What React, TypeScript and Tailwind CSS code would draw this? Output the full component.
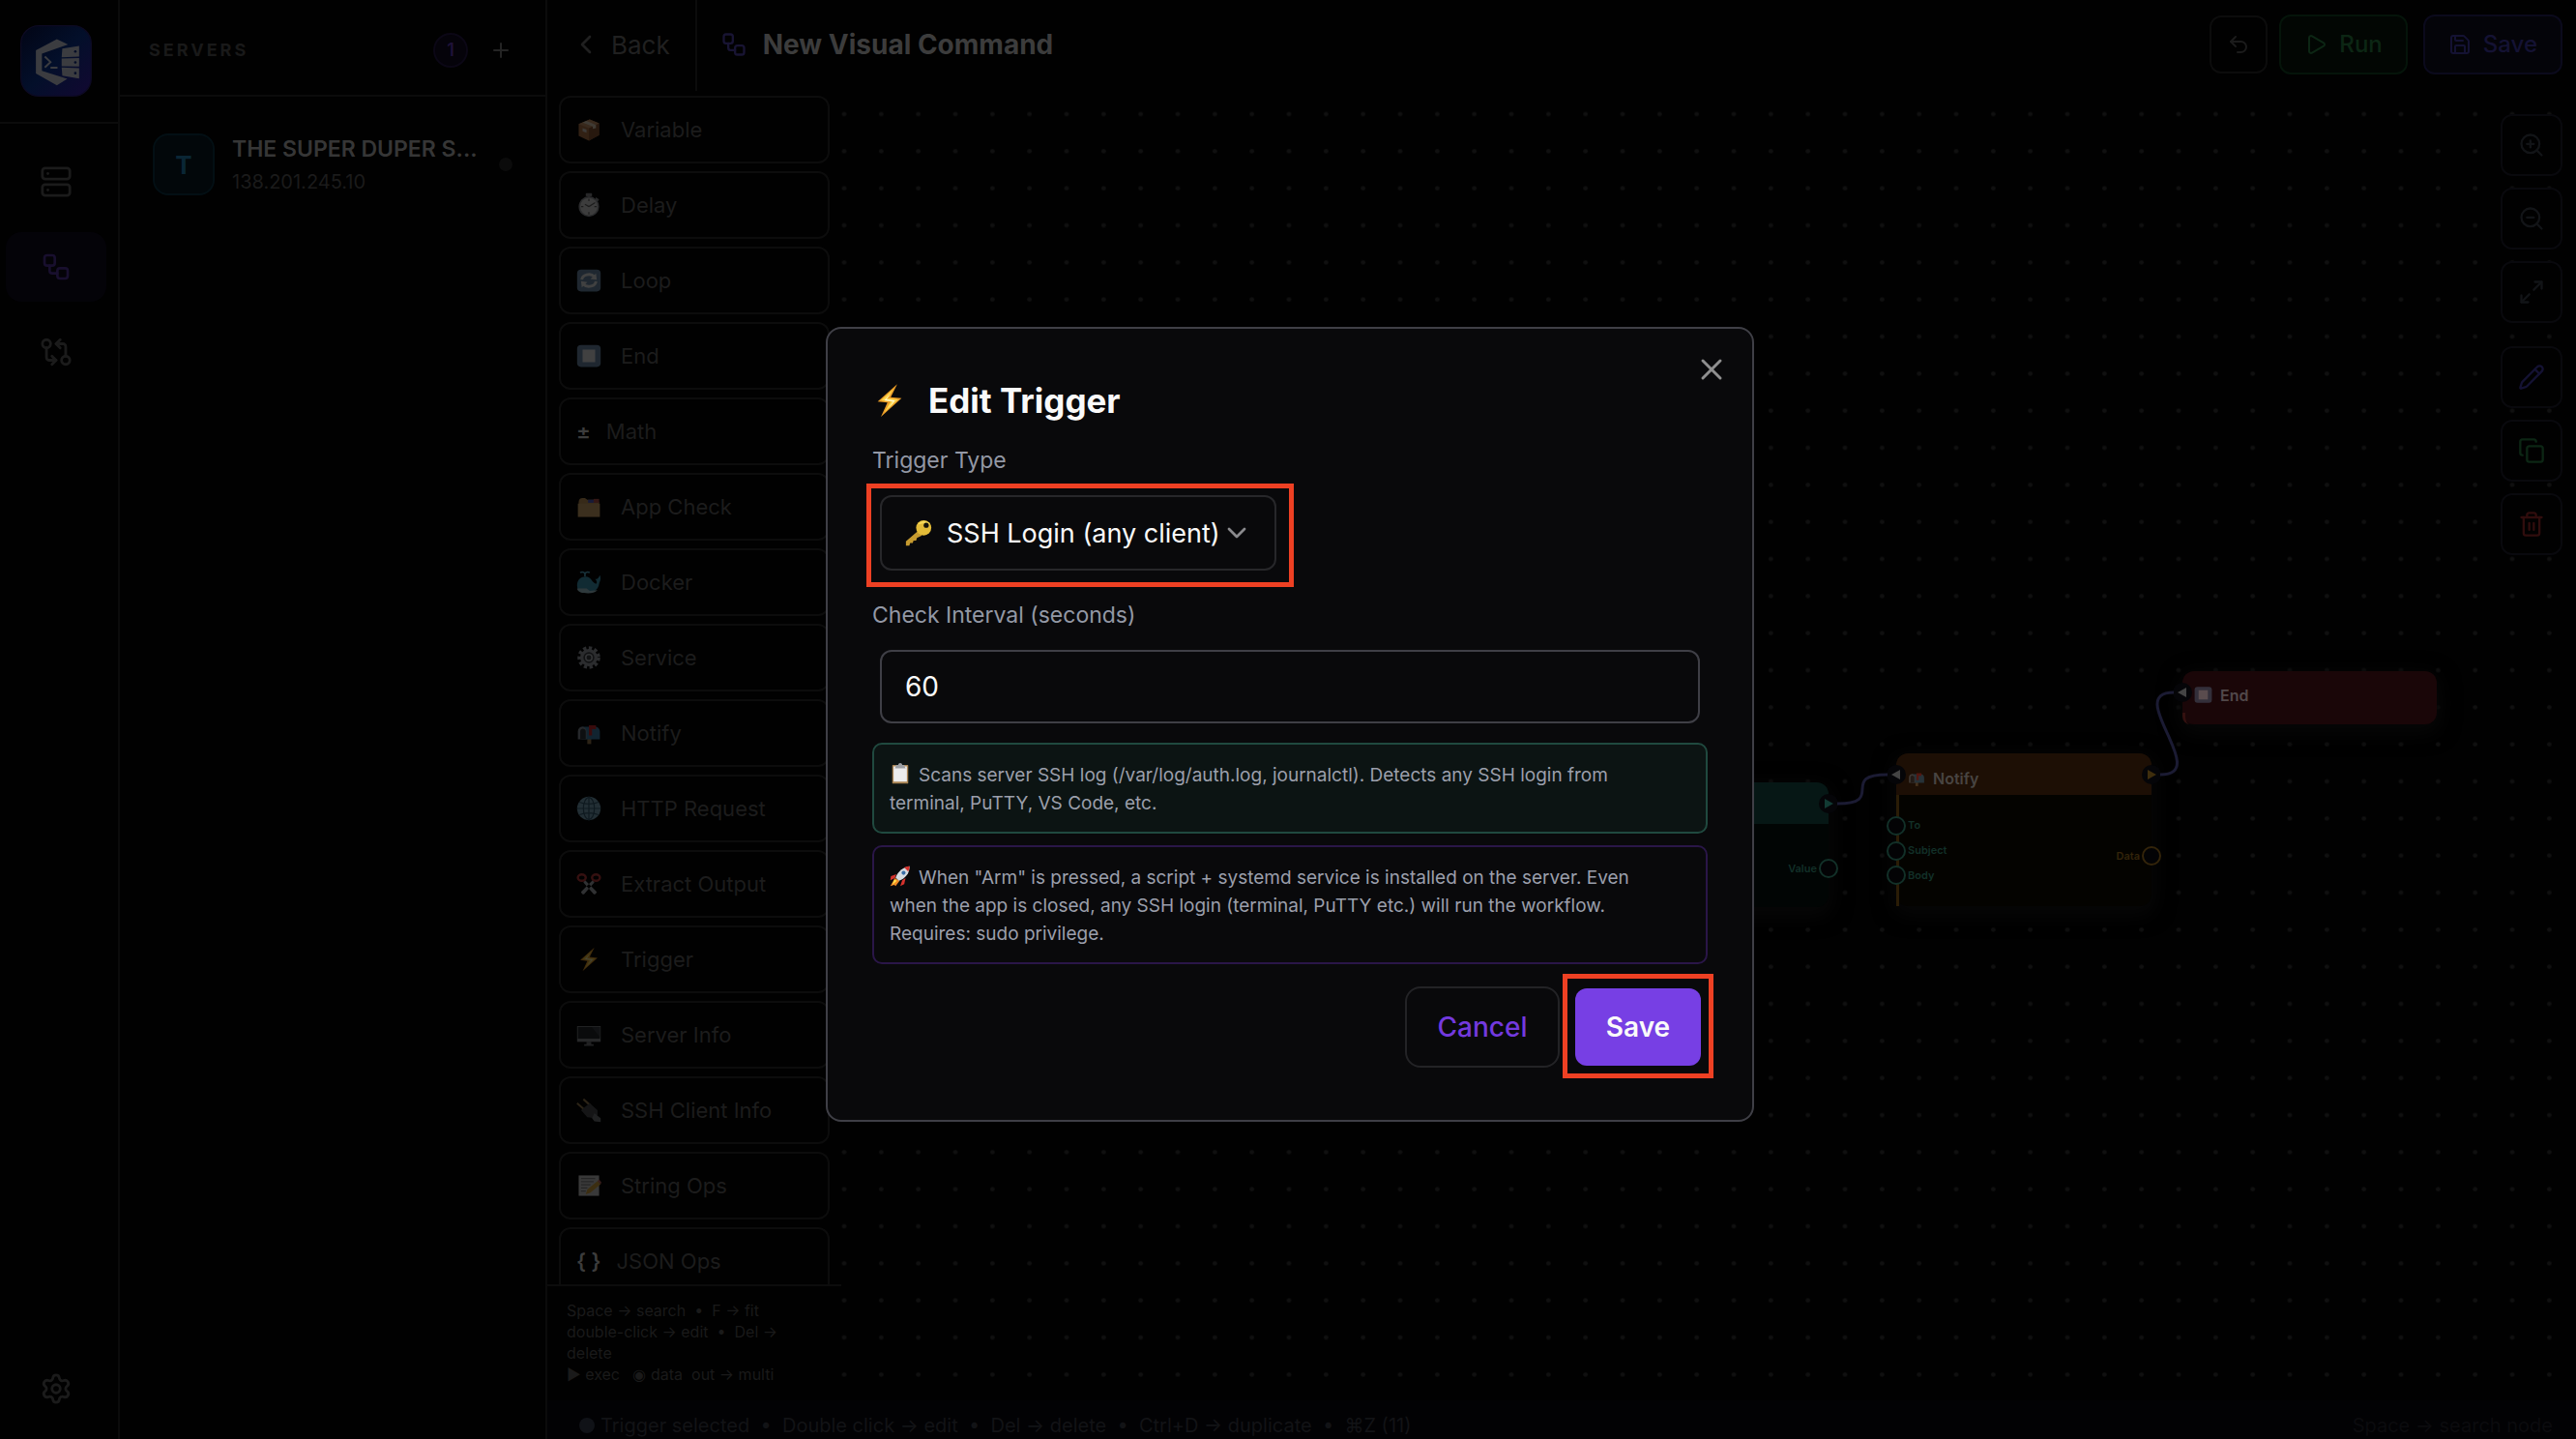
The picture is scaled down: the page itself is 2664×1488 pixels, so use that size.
import React, { useState } from 'react';
import {
  ChevronDown,
  ChevronLeft,
  Copy,
  GitCompare,
  Maximize2,
  Pencil,
  Play,
  Plus,
  Save,
  Server,
  Settings,
  Trash2,
  Undo2,
  Workflow,
  X,
  ZoomIn,
  ZoomOut,
} from 'lucide-react';

type EmojiName =
  | 'box'
  | 'stopwatch'
  | 'loop'
  | 'stop'
  | 'folder'
  | 'whale'
  | 'gear'
  | 'mailbox'
  | 'globe'
  | 'scissors'
  | 'bolt'
  | 'monitor'
  | 'plug'
  | 'memo'
  | 'key'
  | 'clipboard'
  | 'rocket';

const emojiArt: Record<EmojiName, React.ReactNode> = {
  box: (
    <>
      <path d="M3 9 17 3l12 5v15l-13 7L3 24z" fill="#b5774a" />
      <path d="M16 14 29 8v15l-13 7z" fill="#8d5632" />
      <path d="M3 9 17 3l12 5-13 6z" fill="#cf9768" />
      <path d="m8 7 5-2 12 5v4l-4 1v-3z" fill="#e8d6bf" />
      <path d="m8 14 5 2v4l-5-2z" fill="#dcd3c8" />
    </>
  ),
  stopwatch: (
    <>
      <rect x="12" y="1" width="8" height="4" rx="1" fill="#8c8f93" />
      <path d="m25 6 4 3-2 3-3-3z" fill="#8c8f93" />
      <circle cx="16" cy="18" r="13" fill="#9b9ea2" />
      <circle cx="16" cy="18" r="11" fill="#dddddd" />
      <path d="M16 8v3M16 25v3M6 18h3M23 18h3M16 18l-5-3M16 18l8-5" stroke="#666" strokeWidth="1.5" fill="none" />
    </>
  ),
  loop: (
    <>
      <rect x="1" y="2" width="30" height="28" rx="5" fill="#6f8fae" />
      <path d="M7 15a9 7 0 0 1 16-4M25 17a9 7 0 0 1-16 4" stroke="#eee" strokeWidth="3.5" fill="none" />
      <path d="m25 7 1 8-8-1zM7 25l-1-8 8 1z" fill="#eee" />
    </>
  ),
  stop: (
    <>
      <rect x="1" y="2" width="30" height="28" rx="5" fill="#6f8fae" />
      <rect x="8" y="8" width="16" height="16" fill="#eee" />
    </>
  ),
  folder: (
    <>
      <path d="M3 10c0-3 2-5 5-5h3l3 2h13l2 3v18H3z" fill="#c99a5b" />
      <path d="M15 7h8v4h-8z" fill="#5560c9" />
      <path d="M22 6h7v5h-7z" fill="#b9524d" />
      <path d="M2 12h28v17H2z" fill="#d8ac6c" />
    </>
  ),
  whale: (
    <>
      <path d="M11 9V4M11 5C9 2 6 3 5 4M11 5c2-3 5-2 6-1" stroke="#58b9d8" strokeWidth="2" fill="none" />
      <path d="M1 20c0-7 5-11 11-11 7 0 8 8 13 9 2-1 1-4-1-6 3 0 4-1 6-5 2 5 0 8-1 11-1 7-6 11-14 11C7 29 1 28 1 20z" fill="#3f9bb9" />
      <path d="M1 24h12l4 3 10-1c-3 3-7 4-12 4C7 30 2 29 1 24z" fill="#a9cfd9" />
    </>
  ),
  gear: (
    <>
      <circle cx="16" cy="16" r="12" stroke="#9da0a6" strokeWidth="5" strokeDasharray="4 3" fill="none" />
      <circle cx="16" cy="16" r="9" fill="#3d4045" stroke="#9da0a6" strokeWidth="4" />
      <circle cx="16" cy="16" r="4" stroke="#b6b9bf" strokeWidth="2" fill="none" />
    </>
  ),
  mailbox: (
    <>
      <path d="M14 22h5v8h-5z" fill="#a17e51" />
      <path d="M7 8h17c4 0 6 3 6 7v9H7z" fill="#3f83ad" />
      <path d="M2 14c0-8 11-8 11 0v10H2z" fill="#89929b" />
      <path d="M5 14c0-5 7-4 7 0v10H5z" fill="#30363d" />
      <path d="M16 6h9v5h-5v8h-4z" fill="#d1262c" />
    </>
  ),
  globe: (
    <>
      <circle cx="16" cy="16" r="15" fill="#7ba9bf" />
      <g stroke="#345a70" strokeWidth="1.5" fill="none">
        <ellipse cx="16" cy="16" rx="7" ry="14" />
        <path d="M16 1v30M1 16h30M4 8c7 3 17 3 24 0M4 24c7-3 17-3 24 0" />
      </g>
    </>
  ),
  scissors: (
    <>
      <path d="m11 11 15 15c-1 3-3 4-4 3L9 14zM21 11 6 26c1 3 3 4 4 3l13-15z" fill="#b0b3b8" />
      <ellipse cx="7" cy="8" rx="5" ry="4" fill="none" stroke="#c03a3a" strokeWidth="3" />
      <ellipse cx="25" cy="8" rx="5" ry="4" fill="none" stroke="#c03a3a" strokeWidth="3" />
    </>
  ),
  bolt: (
    <>
      <path d="M23 1 5 17l9 1-6 13 19-17-10-1z" fill="#e89b27" />
      <path d="m20 5-12 11 9 1-6 10 13-12-10-1z" fill="#fdd64b" />
      <path d="m18 9-7 7 8 1-4 6 6-7-8-1z" fill="#fff7cf" />
    </>
  ),
  monitor: (
    <>
      <rect x="1" y="5" width="30" height="20" fill="#8b8e91" />
      <rect x="2" y="6" width="28" height="15" fill="#24282b" />
      <path d="M20 6h10v13z" fill="#3a3f43" />
      <path d="M13 25h6v3h3v2H10v-2h3z" fill="#77797c" />
    </>
  ),
  plug: (
    <>
      <path d="m1 7 9 8M9 2l9 8" stroke="#9b8050" strokeWidth="2.5" />
      <path d="m6 16 11-9 10 9v6l-4 4-9-1z" fill="#4b4d50" />
      <path d="m23 20 8 6v5l-8-1-3-4z" fill="#76797c" />
    </>
  ),
  memo: (
    <>
      <path d="M3 3h26v26H3z" fill="#cfcfcf" />
      <path d="M6 7h18M6 11h16M6 15h12M6 19h8M6 23h6" stroke="#888" strokeWidth="1.5" />
      <path d="m12 27 2-6L27 10l4 4-13 11z" fill="#dba83c" />
      <path d="m27 10 2-2 3 4-1 2z" fill="#c96a63" />
    </>
  ),
  key: (
    <>
      <path d="M15 14 1 26v5h4l1-3h3l1-3h3l1-3 6-3z" fill="#c59a2f" />
      <circle cx="22" cy="10" r="9" fill="#e3bb38" />
      <path d="M15 6a9 9 0 0 1 15 0c-5-2-9-1-15 0z" fill="#f6d95a" />
      <circle cx="25" cy="7" r="3" fill="#14120a" />
    </>
  ),
  clipboard: (
    <>
      <rect x="4" y="3" width="24" height="28" rx="1" fill="#a98352" />
      <rect x="6" y="5" width="20" height="23" fill="#ececec" />
      <path d="M10 3h3c0-4 6-4 6 0h3l2 5H8z" fill="#9a9da1" />
    </>
  ),
  rocket: (
    <>
      <path d="M8 19 1 31l6-2 2 2 6-8z" fill="#f08a24" />
      <path d="m7 21-3 8 7-6z" fill="#ffe14d" />
      <path d="m10 13-8 3-1 6 7-3zM19 22l-3 9 6-3 2-9z" fill="#d5322d" />
      <path d="M30 1c-9 1-17 7-21 17l5 5C24 19 30 12 30 1z" fill="#d5dae0" />
      <path d="M30 1c-3 0-6 1-8 2l6 6c1-2 2-5 2-8z" fill="#d5322d" />
      <circle cx="21" cy="11" r="3" fill="#3a6ea8" />
    </>
  ),
};

const Emoji = ({ name, className }: { name: EmojiName; className: string }) => (
  <svg viewBox="0 0 32 32" className={`shrink-0 ${className}`} aria-hidden="true">
    {emojiArt[name]}
  </svg>
);

const Logo = () => (
  <svg viewBox="0 0 225 225" className="size-[74px]" role="img" aria-label="Logo">
    <defs>
      <linearGradient id="logo-bg" x1="0" y1="0" x2="1" y2="1">
        <stop offset="0" stopColor="#020515" />
        <stop offset="0.5" stopColor="#030f2a" />
        <stop offset="1" stopColor="#120832" />
      </linearGradient>
    </defs>
    <rect x="2" y="2" width="221" height="221" rx="56" fill="url(#logo-bg)" stroke="#0d0a22" strokeWidth="4" />
    <g transform="translate(-30 -48)" fill="#3b3c40">
      <path d="M145 92 180 109 98 138V192L178 217 145 237 79 200V127Z" />
      <path d="M162 122 215 113V147L160 149ZM160 153 215 151V178L160 177ZM160 181 215 183V216L162 207Z" />
      <path d="m107 147 18 17-18 17M125 182h22" fill="none" stroke="#3b3c40" strokeWidth="6" />
      <g fill="#030c26">
        <circle cx="203" cy="131" r="4" />
        <circle cx="203" cy="165" r="4" />
        <circle cx="203" cy="199" r="4" />
      </g>
    </g>
  </svg>
);

const paletteItems: { label: string; icon?: EmojiName; glyph?: string }[] = [
  { label: 'Variable', icon: 'box' },
  { label: 'Delay', icon: 'stopwatch' },
  { label: 'Loop', icon: 'loop' },
  { label: 'End', icon: 'stop' },
  { label: 'Math', glyph: '±' },
  { label: 'App Check', icon: 'folder' },
  { label: 'Docker', icon: 'whale' },
  { label: 'Service', icon: 'gear' },
  { label: 'Notify', icon: 'mailbox' },
  { label: 'HTTP Request', icon: 'globe' },
  { label: 'Extract Output', icon: 'scissors' },
  { label: 'Trigger', icon: 'bolt' },
  { label: 'Server Info', icon: 'monitor' },
  { label: 'SSH Client Info', icon: 'plug' },
  { label: 'String Ops', icon: 'memo' },
  { label: 'JSON Ops', glyph: '{ }' },
];

const NavRail = () => (
  <nav className="flex w-[124px] shrink-0 flex-col border-r-2 border-[#0b0b0b]">
    <div className="flex h-32 items-center border-b-2 border-[#0b0b0b] pl-[21px]">
      <Logo />
    </div>
    <div className="flex flex-1 flex-col gap-4 pt-6 pr-3 pl-1.5 pb-4">
      <button aria-label="Servers" className="flex h-[72px] items-center justify-center rounded-2xl text-[#1b1b1b]">
        <Server size={34} />
      </button>
      <button
        aria-label="Visual commands"
        className="flex h-[72px] items-center justify-center rounded-2xl bg-[#040308] text-[#180f2e]"
      >
        <Workflow size={32} />
      </button>
      <button aria-label="Compare" className="flex h-[72px] items-center justify-center rounded-2xl text-[#1b1b1b]">
        {/* Two branches with an arrow each */}
        <svg
          viewBox="0 0 24 24"
          className="size-[34px]"
          fill="none"
          stroke="currentColor"
          strokeWidth="2"
          strokeLinecap="round"
          strokeLinejoin="round"
          aria-hidden="true"
        >
          <circle cx="5" cy="6" r="3" />
          <path d="M12 6h5a2 2 0 0 1 2 2v7" />
          <path d="m15 9-3-3 3-3" />
          <circle cx="19" cy="18" r="3" />
          <path d="M12 18H7a2 2 0 0 1-2-2V9" />
          <path d="m9 15 3 3-3 3" />
        </svg>
      </button>
      <button
        aria-label="Settings"
        className="mt-auto flex h-[72px] items-center justify-center rounded-2xl text-[#1b1b1b]"
      >
        <Settings size={34} />
      </button>
    </div>
  </nav>
);

const ServerList = () => (
  <aside className="flex w-[442px] shrink-0 flex-col border-r-2 border-[#0b0b0b]">
    <div className="flex h-[100px] items-center border-b-2 border-[#0b0b0b] pt-1.5 pr-[34px] pl-[30px]">
      <h2 className="text-lg font-bold tracking-[3px] text-[#191919]">SERVERS</h2>
      <span className="ml-auto flex size-9 items-center justify-center rounded-full border-2 border-[#0b0715] bg-[#05030a] text-lg font-semibold text-[#1f1238]">
        1
      </span>
      <button aria-label="Add server" className="ml-[22px] text-[#242424]">
        <Plus size={24} />
      </button>
    </div>
    <button className="flex items-center gap-[18px] px-[34px] pt-9 text-left">
      <span className="flex size-16 shrink-0 items-center justify-center rounded-2xl border-2 border-[#030f14] bg-[#02070a] text-[26px] font-bold text-[#0a2635]">
        T
      </span>
      <span className="flex min-w-0 flex-1 flex-col">
        <span className="text-[23px] leading-9 font-semibold whitespace-nowrap text-[#363636]">THE SUPER DUPER S...</span>
        <span className="text-xl leading-8 text-[#1b1b1b]">138.201.245.10</span>
      </span>
      <span className="size-3.5 shrink-0 rounded-full bg-[#0b0b0b]" />
    </button>
  </aside>
);

const Header = () => (
  <header className="flex h-[94px] shrink-0 items-center pr-3.5">
    <button className="flex h-full items-center gap-2.5 border-r-2 border-[#0b0b0b] pr-[26px] pb-0.5 pl-6 text-[26px] text-[#202020]">
      <ChevronLeft size={32} />
      Back
    </button>
    <div className="flex items-center gap-4 pb-0.5 pl-6">
      <Workflow size={28} className="text-[#181433]" />
      <h1 className="text-[28px] font-bold text-[#3c3c3c]">New Visual Command</h1>
    </div>
    <div className="ml-auto flex items-center pb-0.5">
      <button
        aria-label="Undo"
        className="mr-3 flex size-[60px] items-center justify-center rounded-xl border-2 border-[#0c0c0c] text-[#1b1b1b]"
      >
        <Undo2 size={24} />
      </button>
      <button className="mr-4 flex h-[62px] items-center gap-3 rounded-xl border-2 border-[#05140a] bg-[#020603] px-6 text-2xl font-medium text-[#0c2614]">
        <Play size={24} />
        Run
      </button>
      <button className="flex h-[62px] items-center gap-3 rounded-xl border-2 border-[#0b0a1c] bg-[#040409] px-6 text-2xl font-medium text-[#141233]">
        <Save size={24} />
        Save
      </button>
    </div>
  </header>
);

const Palette = () => (
  <div className="flex w-[304px] shrink-0 flex-col">
    <div className="flex min-h-0 flex-1 flex-col gap-2 overflow-hidden px-3 pt-[5px]">
      {paletteItems.map((item) => (
        <button
          key={item.label}
          className="flex h-[70px] shrink-0 items-center rounded-xl border-2 border-[#0c0c0c] px-4 text-[22px] text-[#1c1c1c]"
        >
          {item.icon ? (
            <Emoji name={item.icon} className="mr-5 size-[26px] opacity-27" />
          ) : (
            <span className="mr-4 font-semibold whitespace-pre text-[#3c3c3c]">{item.glyph}</span>
          )}
          {item.label}
        </button>
      ))}
    </div>
    <p className="border-t-2 border-[#0c0c0c] px-5 pt-3.5 pb-4 text-base leading-[22px] whitespace-pre text-[#1a1a1a]">
      Space → search {' • '} F → fit
      <br />
      double-click → edit {' • '} Del →
      <br />
      delete
      <br />
      ▶ exec {'  '}◉ data {' '}out → multi
    </p>
  </div>
);

// Round connector that sits on a node's edge; centred on its own point.
const Ring = ({ className }: { className: string }) => (
  <span className={`absolute size-5 rounded-full border-2 bg-[#030305] ${className}`} />
);

const ExecPort = ({ className, flip }: { className: string; flip?: boolean }) => (
  <span className={`absolute flex size-5 items-center justify-center rounded-full bg-[#050508] ${className}`}>
    <svg viewBox="0 0 10 10" className="size-2.5" aria-hidden="true">
      <path d={flip ? 'M9 0v10L0 5z' : 'M1 0v10l9-5z'} fill="currentColor" />
    </svg>
  </span>
);

const tools = [
  { label: 'Zoom in', icon: ZoomIn, color: 'text-[#121417]', gap: '' },
  { label: 'Zoom out', icon: ZoomOut, color: 'text-[#121417]', gap: '' },
  { label: 'Fit', icon: Maximize2, color: 'text-[#121417]', gap: '' },
  { label: 'Edit', icon: Pencil, color: 'text-[#141233]', gap: 'mt-3' },
  { label: 'Duplicate', icon: Copy, color: 'text-[#0c2614]', gap: '' },
  { label: 'Delete', icon: Trash2, color: 'text-[#300d0d]', gap: '' },
];

const Canvas = () => (
  <div className="relative min-w-0 flex-1 overflow-hidden">
    <svg className="absolute inset-0 size-full" aria-hidden="true">
      <defs>
        <pattern id="dots" width="23" height="23" x="-9.7" y="2.9" patternUnits="userSpaceOnUse" patternTransform="scale(1.6667)">
          <circle cx="11.5" cy="11.5" r="1.4" fill="#101010" />
        </pattern>
      </defs>
      <rect width="100%" height="100%" fill="url(#dots)" />
    </svg>

    {/* Nodes */}
    <div className="absolute top-[715px] left-[757px] h-[129px] w-[264px] rounded-xl bg-[#010504] shadow-[0_6px_20px_4px_#070707]">
      <div className="h-[43px] rounded-t-xl bg-[#061715]" />
      <ExecPort className="top-3 -right-2.5 text-[#123a33]" />
      <span className="absolute top-[79px] right-3 text-[11px] leading-5 font-semibold text-[#123028]">Value</span>
      <Ring className="top-[79px] -right-2.5 border-[#123028]" />
    </div>
    <div className="absolute top-[685px] left-[1091px] h-[158px] w-[264px] rounded-xl bg-[#040300] shadow-[0_6px_20px_4px_#070707]">
      <div className="flex h-[43px] items-center gap-2 rounded-t-xl bg-[#1d0f05] pt-2 pl-3 text-base font-semibold text-[#484441]">
        <Emoji name="mailbox" className="size-[18px] opacity-30" />
        Notify
      </div>
      <div className="h-[115px] border-l-3 border-[#2a1c06]" />
      <ExecPort flip className="top-3 -left-2.5 text-[#444444]" />
      <ExecPort className="top-3 -right-2.5 text-[#3f2e0d]" />
      <Ring className="top-[65px] -left-2.5 border-[#123028]" />
      <Ring className="top-[91px] -left-2.5 border-[#123028]" />
      <Ring className="top-[116px] -left-2.5 border-[#123028]" />
      <span className="absolute top-[64px] left-3 text-[11px] leading-5 font-semibold text-[#123028]">To</span>
      <span className="absolute top-[90px] left-3 text-[11px] leading-5 font-semibold text-[#123028]">Subject</span>
      <span className="absolute top-[116px] left-3 text-[11px] leading-5 font-semibold text-[#123028]">Body</span>
      <span className="absolute top-[96px] right-3 text-[11px] leading-5 font-semibold text-[#33240a]">Data</span>
      <Ring className="top-[96px] -right-2.5 border-[#33240a]" />
    </div>
    <div className="absolute top-[600px] left-[1387px] h-[55px] w-[263px] rounded-xl bg-[#1a0608] shadow-[0_6px_20px_4px_#070707]">
      <div className="flex h-[43px] items-center gap-2 pt-1.5 pl-3 text-base font-semibold text-[#51484a]">
        <Emoji name="stop" className="size-[19px] opacity-30" />
        End
      </div>
      <div className="h-3 rounded-bl-lg border-l-3 border-[#33100f]" />
      <ExecPort flip className="top-3 -left-2.5 text-[#444444]" />
    </div>

    {/* Connections */}
    <svg className="absolute inset-0 size-full" aria-hidden="true">
      <g fill="none" stroke="#1b1b33" strokeWidth="3">
        <path d="M1030 737C1081 737 1031 707 1082 707" />
        <path d="M1364 707C1418 707 1325 622 1378 622" />
      </g>
    </svg>

    <div className="absolute top-6 right-3.5 flex flex-col gap-3">
      {tools.map(({ label, icon: Icon, color, gap }) => (
        <button
          key={label}
          aria-label={label}
          className={`flex size-16 items-center justify-center rounded-xl border-2 border-[#09090d] bg-[#010101] ${color} ${gap}`}
        >
          <Icon size={28} />
        </button>
      ))}
    </div>
  </div>
);

const StatusBar = () => (
  <footer className="flex h-10 shrink-0 items-center bg-[#020204] pt-3 pr-6 pl-[33px] text-xl whitespace-pre text-[#121316]">
    <span className="mr-1.5 size-4 rounded-full bg-[#101217]" />
    Trigger selected{'  •  '}Double click → edit{'  •  '}Del → delete{'  •  '}Ctrl+D → duplicate{'  •  '}⌘Z (11)
    <span className="ml-auto text-[#0b0b0e]">Space → search node</span>
  </footer>
);

const Highlight = ({ className }: { className: string }) => (
  <span className={`pointer-events-none absolute border-5 border-[#ee4023] ${className}`} />
);

const EditTriggerDialog = () => {
  const [interval, setIntervalValue] = useState('60');
  const [triggerType, setTriggerType] = useState('ssh-login');

  return (
    <div className="fixed inset-0 flex items-center justify-center pt-[10px] pl-1">
      <div
        role="dialog"
        aria-labelledby="dialog-title"
        className="relative w-[960px] rounded-2xl border-2 border-[#3f3f46] bg-[#09090b] px-[46px] pt-[50px] pb-[54px]"
      >
        <button aria-label="Close" className="absolute top-6 right-6 text-[#8f8f8f]">
          <X size={36} />
        </button>
        <h2 id="dialog-title" className="flex items-center gap-[22px] text-[35px] leading-[48px] font-bold text-[#fafafa]">
          <Emoji name="bolt" className="size-9" />
          Edit Trigger
        </h2>

        <label htmlFor="trigger-type" className="mt-[22px] block text-[23px] leading-8 text-[#9398a5]">
          Trigger Type
        </label>
        <div className="relative mx-2 mt-5 w-[410px]">
          <select
            id="trigger-type"
            value={triggerType}
            onChange={(e) => setTriggerType(e.target.value)}
            className="h-[78px] w-full appearance-none rounded-xl border-2 border-[#27272a] bg-[#09090b] pt-0.5 pl-[67px] text-[27px] text-[#fafafa]"
          >
            <option value="ssh-login">SSH Login (any client)</option>
          </select>
          <Emoji name="key" className="pointer-events-none absolute top-[25px] left-[26px] size-7" />
          <ChevronDown size={32} className="pointer-events-none absolute top-[23px] right-[25px] text-[#8a8a8d]" />
          <Highlight className="-top-3 -right-[18px] -bottom-[17px] -left-3.5" />
        </div>

        <label htmlFor="check-interval" className="mt-[30px] block text-[23px] leading-8 text-[#9398a5]">
          Check Interval (seconds)
        </label>
        <div className="mx-2 mt-5">
          <input
            id="check-interval"
            type="text"
            inputMode="numeric"
            value={interval}
            onChange={(e) => setIntervalValue(e.target.value)}
            className="block h-[76px] w-full rounded-xl border-2 border-[#3f3f46] bg-transparent px-6 text-[28px] text-[#fafafa]"
          />
        </div>

        <p className="mt-5 rounded-[10px] border-2 border-[#20493f] bg-[#0c1413] px-4 pt-[17px] pb-[15px] text-[19px] leading-[29px] text-[#9b9fab]">
          <Emoji name="clipboard" className="mr-2 inline size-[22px] align-[-3px]" />
          Scans server SSH log (/var/log/auth.log, journalctl). Detects any SSH login from
          <br />
          terminal, PuTTY, VS Code, etc.
        </p>
        <p className="mt-3 rounded-[10px] border-2 border-[#2a1648] px-4 pt-[17px] pb-[15px] text-[19px] leading-[29px] text-[#9b9fab]">
          <Emoji name="rocket" className="mr-2 inline size-[22px] align-[-3px]" />
          When "Arm" is pressed, a script + systemd service is installed on the server. Even
          <br />
          when the app is closed, any SSH login (terminal, PuTTY etc.) will run the workflow.
          <br />
          Requires: sudo privilege.
        </p>

        <div className="mt-[23px] flex items-center justify-end gap-4 pr-[7px]">
          <button className="h-[84px] w-40 rounded-2xl border-2 border-[#232326] text-[28px] font-medium text-[#7339df]">
            Cancel
          </button>
          <div className="relative">
            <button className="block h-20 w-[130px] rounded-xl bg-[#773fe4] text-[28px] font-semibold text-[#fafafa]">
              Save
            </button>
            <Highlight className="-top-[15px] -right-[13px] -bottom-[13px] -left-[13px]" />
          </div>
        </div>
      </div>
    </div>
  );
};

const App = () => {
  return (
    <div className="flex h-screen overflow-hidden bg-[#010101] font-['Inter','Noto_Sans',sans-serif]">
      <NavRail />
      <ServerList />
      <main className="flex min-w-0 flex-1 flex-col">
        <Header />
        <div className="flex min-h-0 flex-1">
          <Palette />
          <Canvas />
        </div>
        <StatusBar />
      </main>
      <EditTriggerDialog />
    </div>
  );
};

export default App;
